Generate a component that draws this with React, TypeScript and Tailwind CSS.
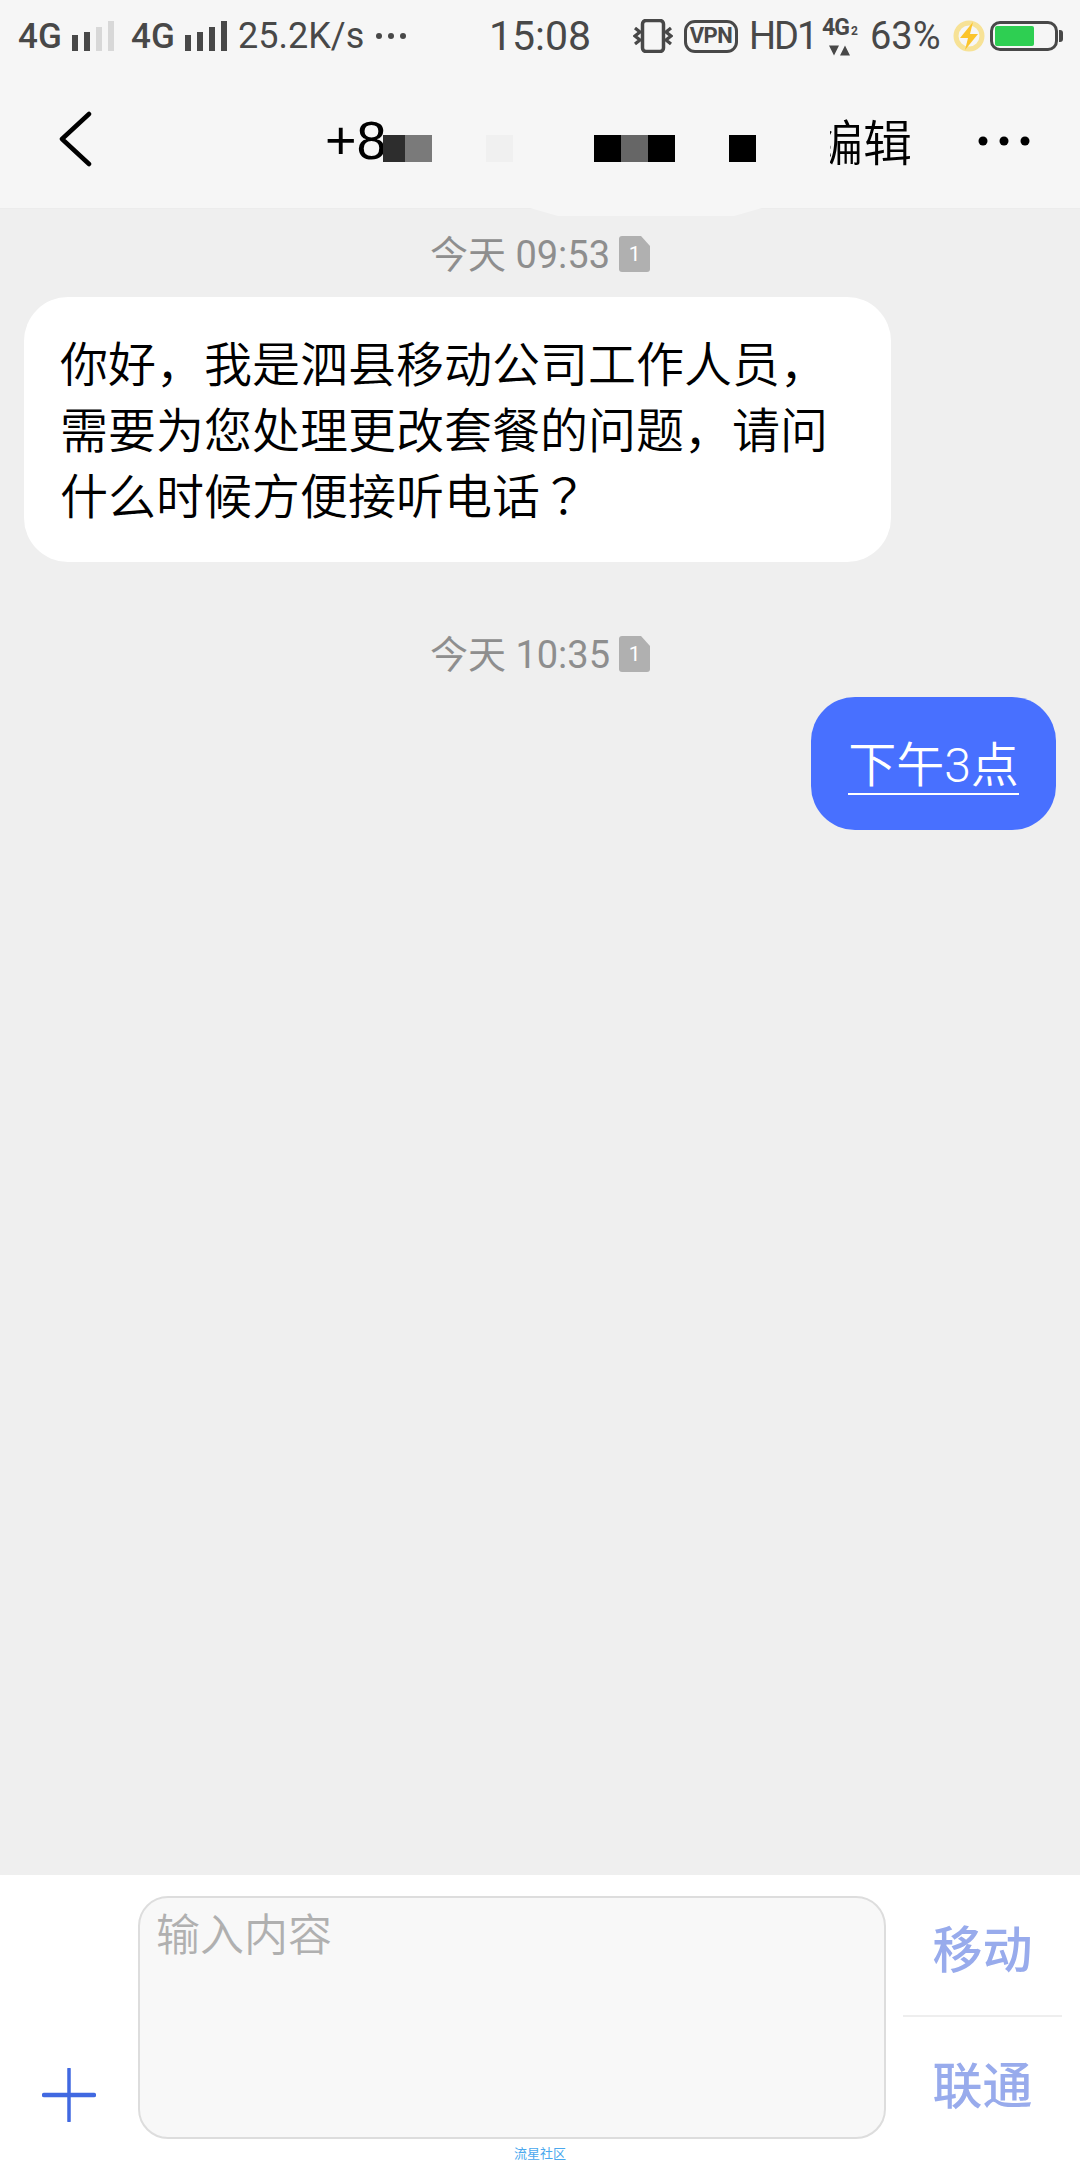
import React from "react";

const Bars = ({ dim }: { dim?: boolean }) => (
  <svg width="42" height="32" viewBox="0 0 42 32" className="block">
    <rect x="0" y="14" width="6" height="16" fill="#484848" />
    <rect x="12" y="11" width="6" height="19" fill="#484848" />
    <rect x="24" y="6" width="6" height="24" fill={dim ? "#d8d8d8" : "#484848"} />
    <rect x="36" y="0" width="6" height="30" fill={dim ? "#d8d8d8" : "#484848"} />
  </svg>
);

const Sim = () => (
  <div className="relative w-[31px] h-[36px] shrink-0 mb-[3px]">
    <svg width="31" height="36" viewBox="0 0 31 36" className="absolute inset-0">
      <path d="M3 0H22L31 10V33a3 3 0 0 1-3 3H3a3 3 0 0 1-3-3V3a3 3 0 0 1 3-3Z" fill="#b0b0b0" />
    </svg>
    <span className="absolute inset-0 flex items-center justify-center pt-[1px] text-[21px] leading-none text-white font-['Roboto',sans-serif]">1</span>
  </div>
);

const Stamp = ({ t, cls }: { t: string; cls: string }) => (
  <div className={`flex items-center justify-center gap-[9px] h-[50px] text-[38px] leading-none text-[#8e8e8e] ${cls}`}>
    <span className="whitespace-nowrap">{t}</span>
    <Sim />
  </div>
);

export default function App() {
  return (
    <div className="w-[1080px] h-[2160px] flex flex-col overflow-hidden bg-[#efefef] font-['Roboto','Noto_Sans_CJK_SC',sans-serif]">
      <header className="relative h-[209px] shrink-0 bg-[#f6f6f6] border-b border-[#ececec]">
        <div className="flex items-center h-[72px] text-[#484848]">
          <span className="ml-[18px] w-[44px] text-[35px] font-medium leading-none">4G</span>
          <div className="ml-[10px] mt-[2px]"><Bars dim /></div>
          <span className="ml-[17px] w-[44px] text-[35px] font-medium leading-none">4G</span>
          <div className="ml-[10px] mt-[2px]"><Bars /></div>
          <span className="ml-[11px] w-[128px] text-[36px] leading-none whitespace-nowrap">25.2K/s</span>
          <svg width="32" height="8" viewBox="0 0 32 8" className="ml-[9px] block">
            <circle cx="4" cy="4" r="3" fill="#484848" />
            <circle cx="16" cy="4" r="3" fill="#484848" />
            <circle cx="28" cy="4" r="3" fill="#484848" />
          </svg>
          <span className="ml-[82px] w-[102px] text-[41px] leading-none">15:08</span>
          <svg width="40" height="34" viewBox="0 0 40 34" className="ml-[42px] block">
            <rect x="9.500" y="1.500" width="21" height="31" rx="3.500" fill="none" stroke="#484848" strokeWidth="3.500" />
            <path d="M2 9l5 4-5 4 5 4-5 4M38 9l-5 4 5 4-5 4 5 4" fill="none" stroke="#484848" strokeWidth="3.200" />
          </svg>
          <div className="ml-[11px] w-[54px] h-[33px] rounded-[11px] border-[3px] border-[#484848] flex items-center justify-center text-[22px] font-bold leading-none tracking-[-0.5px]">VPN</div>
          <span className="ml-[11px] w-[66px] text-[38px] leading-none whitespace-nowrap tracking-[-2px]">HD1</span>
          <div className="ml-[7px] w-[38px] h-[34px] flex flex-col items-start">
            <span className="text-[23px] font-bold leading-[18px] whitespace-nowrap tracking-[-1px]">4G<span className="text-[12px] align-baseline ml-[2px]">2</span></span>
            <svg width="22" height="11" viewBox="0 0 22 11" className="ml-[7px] mt-[5px] block shrink-0">
              <path d="M0 0.500H10L5 10.500Z M11 10.500H21L16 0.500Z" fill="#484848" />
            </svg>
          </div>
          <span className="ml-[10px] w-[72px] text-[38px] leading-none whitespace-nowrap">63%</span>
          <svg width="32" height="32" viewBox="0 0 32 32" className="ml-[11px] block">
            <circle cx="16" cy="16" r="13" fill="none" stroke="#f7e296" strokeWidth="5" />
            <path d="M20 2L7 18h8l-3 12 13-16h-8Z" fill="#fbc42c" />
          </svg>
          <div className="ml-[5px] relative w-[68px] h-[30px] rounded-[10px] border-[3px] border-[#484848] flex items-center pl-[2px]">
            <div className="w-[39px] h-[20px] rounded-[2px] bg-[#2ecf52]" />
            <div className="absolute right-[-8px] top-[6px] w-[4px] h-[12px] rounded-r-[3px] bg-[#484848]" />
          </div>
        </div>

        <div className="flex items-center h-[136px] pb-[2px]">
          <svg width="34" height="56" viewBox="0 0 34 56" className="ml-[59px] block">
            <path d="M30 3L3 28l27 25" fill="none" stroke="#000" strokeWidth="4.500" strokeLinecap="round" strokeLinejoin="round" />
          </svg>
          <span className="ml-[232px] mt-[2px] w-[60px] text-[54px] leading-none text-black font-['Liberation_Sans',sans-serif]">+8</span>
          <span className="ml-[429px] mt-[10px] w-[96px] text-[49px] font-[350] leading-none text-black whitespace-nowrap">编辑</span>
          <svg width="52" height="10" viewBox="0 0 52 10" className="ml-[68px] mt-[4px] block">
            <circle cx="5" cy="5" r="4.500" fill="#000" />
            <circle cx="26" cy="5" r="4.500" fill="#000" />
            <circle cx="47" cy="5" r="4.500" fill="#000" />
          </svg>
        </div>

        <div className="absolute left-[383px] top-[135px] w-[22px] h-[27px] bg-[#2d2d2d]" />
        <div className="absolute left-[405px] top-[135px] w-[27px] h-[27px] bg-[#7a7a7a]" />
        <div className="absolute left-[486px] top-[135px] w-[27px] h-[27px] bg-[#f0f0f0]" />
        <div className="absolute left-[594px] top-[135px] w-[27px] h-[27px] bg-black" />
        <div className="absolute left-[621px] top-[135px] w-[27px] h-[27px] bg-[#666666]" />
        <div className="absolute left-[648px] top-[135px] w-[27px] h-[27px] bg-black" />
        <div className="absolute left-[729px] top-[135px] w-[27px] h-[27px] bg-black" />
        <div className="absolute left-[790px] top-[110px] w-[40px] h-[70px] bg-[#f6f6f6]" />
        <div className="absolute left-[530px] top-[208px] w-[232px] h-[8px] bg-[#f6f6f6] [clip-path:polygon(0_0,100%_0,88%_100%,12%_100%)]" />
      </header>

      <main className="flex-1 flex flex-col">
        <Stamp t="今天 09:53" cls="mt-[21px]" />
        <div className="ml-[24px] mt-[17px] w-[867px] h-[265px] rounded-[44px] bg-white pl-[36px] pt-[36px] text-[48px] leading-[66px] font-[350] text-black whitespace-nowrap">
          你好，我是泗县移动公司工作人员，<br />
          需要为您处理更改套餐的问题，请问<br />
          什么时候方便接听电话<span className="leading-none font-['Noto_Sans_CJK_TC',sans-serif]">？</span>
        </div>
        <Stamp t="今天 10:35" cls="mt-[68px]" />
        <div className="self-end mr-[24px] mt-[17px] w-[245px] h-[133px] rounded-[44px] bg-[#4870ff] flex justify-center pt-[36px]">
          <span className="h-[62px] border-b-2 border-white pt-[5px] text-[48px] leading-[56px] font-[350] text-white whitespace-nowrap">下午3点</span>
        </div>
      </main>

      <footer className="h-[285px] shrink-0 bg-white flex flex-col">
        <div className="flex items-start h-[263px] pt-[21px]">
          <svg width="54" height="54" viewBox="0 0 54 54" className="ml-[42px] mt-[172px] block">
            <path d="M2 27H52" stroke="#4169e1" strokeWidth="4.500" strokeLinecap="round" />
            <path d="M27 1V53" stroke="#4169e1" strokeWidth="3.500" strokeLinecap="round" />
          </svg>
          <div className="ml-[42px] w-[748px] h-[243px] rounded-[30px] border-2 border-[#dddddd] bg-[#f8f8f8] pl-[16px] pt-[8px] text-[44px] leading-[60px] font-[350] text-[#b0b0b0]">
            输入内容
          </div>
          <div className="ml-[17px] w-[159px] flex flex-col items-center text-[50px] font-medium leading-none text-[#98abec]">
            <div className="w-full h-[121px] flex items-center justify-center pb-[9px] border-b-2 border-[#eeeeee]">移动</div>
            <div className="w-full h-[122px] flex items-center justify-center pt-[18px]">联通</div>
          </div>
        </div>
        <div className="mt-[10px] text-center text-[13px] leading-[12px] text-[#4aa8ee]">流星社区</div>
      </footer>
    </div>
  );
}
